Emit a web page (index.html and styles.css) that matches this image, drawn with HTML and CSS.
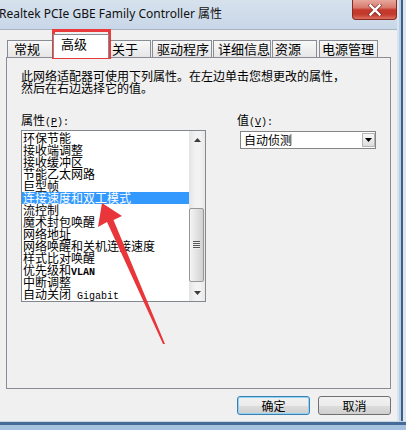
FILE: index.html
```html
<!DOCTYPE html>
<html>
<head>
<meta charset="utf-8">
<title>属性</title>
<link rel="stylesheet" href="styles.css">
</head>
<body>
<div class="screen">
  <div class="top">
    <div class="window">
      <div class="titlebar">
        <span class="title">Realtek PCIe GBE Family Controller 属性</span>
        <div class="close">
          <svg width="14" height="12" viewBox="0 0 14 12">
            <path d="M2.5 1.5 L11.5 10.5 M11.5 1.5 L2.5 10.5" stroke="#5a1a14" stroke-width="4" stroke-linecap="square" fill="none" opacity="0.55"/>
            <path d="M2.5 1.5 L11.5 10.5 M11.5 1.5 L2.5 10.5" stroke="#ffffff" stroke-width="2.4" stroke-linecap="square" fill="none"/>
          </svg>
        </div>
      </div>
      <div class="client">
        <div class="tabs">
          <div class="tab t1">常规</div>
          <div class="tab t2 active">高级</div>
          <div class="tab t3">关于</div>
          <div class="tab t4">驱动程序</div>
          <div class="tab t5">详细信息</div>
          <div class="tab t6">资源</div>
          <div class="tab t7">电源管理</div>
        </div>
        <div class="panel">
          <p class="desc">此网络适配器可使用下列属性。在左边单击您想更改的属性，<br>然后在右边选择它的值。</p>
          <div class="props">
            <div class="col-left">
              <div class="label">属性<span class="lat">(<u>P</u>):</span></div>
              <div class="listbox">
                <ul class="items">
                  <li>环保节能</li>
                  <li>接收端调整</li>
                  <li>接收缓冲区</li>
                  <li>节能乙太网路</li>
                  <li>巨型帧</li>
                  <li class="selected">连接速度和双工模式</li>
                  <li>流控制</li>
                  <li>魔术封包唤醒</li>
                  <li>网络地址</li>
                  <li>网络唤醒和关机连接速度</li>
                  <li>样式比对唤醒</li>
                  <li>优先级和<span class="lat bold">VLAN</span></li>
                  <li>中断调整</li>
                  <li>自动关闭<span class="lat"> Gigabit</span></li>
                </ul>
                <div class="scrollbar">
                  <div class="sb-btn">
                    <svg width="7" height="4" viewBox="0 0 7 4"><path d="M0 4 L3.5 0 L7 4 Z" fill="#3c3c3c"/></svg>
                  </div>
                  <div class="sb-track">
                    <div class="sb-thumb"><div class="grip"></div></div>
                  </div>
                  <div class="sb-btn">
                    <svg width="7" height="4" viewBox="0 0 7 4"><path d="M0 0 L7 0 L3.5 4 Z" fill="#3c3c3c"/></svg>
                  </div>
                </div>
              </div>
            </div>
            <div class="col-right">
              <div class="label">值<span class="lat">(<u>V</u>):</span></div>
              <div class="combo">
                <span class="combo-text">自动侦测</span>
                <span class="combo-btn">
                  <svg width="7" height="4" viewBox="0 0 7 4"><path d="M0 0 L7 0 L3.5 4 Z" fill="#000"/></svg>
                </span>
              </div>
            </div>
          </div>
        </div>
        <div class="buttons">
          <button class="btn default">确定</button>
          <button class="btn">取消</button>
        </div>
      </div>
    </div>
    <div class="frame-right"></div>
  </div>
  <div class="frame-bottom"></div>
  <div class="redbox"></div>
  <svg class="arrow" width="406" height="430" viewBox="0 0 406 430">
    <polygon points="102,203 122,216 113.5,220 165,344 163,344 107,222 98,227" fill="#e8363a"/>
  </svg>
</div>
</body>
</html>
```

FILE: styles.css
```css
* { box-sizing: border-box; }
html, body { margin: 0; padding: 0; }
body {
  width: 406px;
  height: 430px;
  overflow: hidden;
  background: #dde5ee;
  font-family: "Noto Sans CJK SC", sans-serif;
  font-size: 12px;
  color: #000;
}
.screen {
  position: relative;
  width: 406px;
  height: 430px;
  display: flex;
  flex-direction: column;
}
.top { display: flex; height: 421px; }
.window { width: 397px; display: flex; flex-direction: column; }

.titlebar {
  height: 30px;
  border-bottom: 1px solid #a7b4c4;
  background: linear-gradient(#d6e1ed, #c8d7e8);
  display: flex;
  justify-content: space-between;
  align-items: flex-start;
}
.title {
  font-family: "Noto Sans", "Noto Sans CJK SC", sans-serif;
  font-size: 12px;
  line-height: 16px;
  padding-top: 6px;
  margin-left: -1px;
  white-space: nowrap;
  color: #111;
}
.close {
  width: 45px;
  height: 20px;
  border: 1px solid #8a2b22;
  border-top: none;
  border-radius: 0 0 4px 4px;
  background: linear-gradient(#e8a89d 0%, #d87a6d 40%, #c4392c 52%, #c3392d 75%, #dc6f5f 100%);
  display: flex;
  align-items: center;
  justify-content: center;
}

.client {
  height: 391px;
  background: #f0f0f0;
  padding: 4px 6px 6px 6px;
  display: flex;
  flex-direction: column;
}
.tabs {
  height: 23px;
  display: flex;
  align-items: flex-end;
  margin-left: 1px;
  font-size: 13px;
  line-height: 13px;
}
.tab {
  height: 17px;
  border: 1px solid #898c95;
  border-bottom: none;
  padding-top: 1px;
  background: linear-gradient(#f8f8f8, #e6e6e6);
  white-space: nowrap;
}
.tab.active {
  height: 24px;
  margin-bottom: -1px;
  padding-top: 2px;
  background: #ffffff;
  position: relative;
  z-index: 1;
}
.t1 { width: 46px; padding-left: 6px; }
.t2 { width: 56px; padding-left: 7px; }
.t3 { width: 42px; padding-left: 2px; }
.t4 { width: 60px; padding-left: 4px; margin-left: 1px; }
.t5 { width: 58px; padding-left: 4px; margin-left: 1px; }
.t6 { width: 45px; padding-left: 2px; margin-left: 1px; }
.t7 { width: 59px; padding-left: 2px; margin-left: 2px; }

.panel {
  height: 332px;
  border: 1px solid #898c95;
  background: #f0f0f0;
  padding: 12px 14px 0;
}
.desc { margin: 0; line-height: 12px; white-space: nowrap; }
.props { display: flex; margin-top: 20px; }
.col-left { width: 185px; }
.col-right { margin-left: 31px; }
.label { line-height: 12px; height: 12px; white-space: nowrap; }
.lat { font-family: "Liberation Mono", monospace; font-size: 10px; }
.bold { font-weight: bold; }

.listbox {
  margin-top: 4px;
  width: 185px;
  height: 172px;
  border: 1px solid #828790;
  background: #fff;
  display: flex;
}
.items { list-style: none; margin: 0; padding: 1px 0; flex: 1; }
.items li { line-height: 12px; height: 12px; padding-left: 1px; white-space: nowrap; }
.items li.selected { background: #3399ff; color: #fff; }

.scrollbar {
  width: 16px;
  display: flex;
  flex-direction: column;
  background: linear-gradient(to right, #e4e4e4, #f2f2f2 40%, #f2f2f2 70%, #e8e8e8);
}
.sb-btn { height: 17px; display: flex; align-items: center; justify-content: center; }
.sb-track { flex: 1; padding-top: 60px; }
.sb-thumb {
  height: 74px;
  margin-right: 1px;
  border: 1px solid #979797;
  border-radius: 2px;
  background: linear-gradient(to right, #f4f4f4, #e3e3e3 50%, #d1d1d1);
  display: flex;
  align-items: center;
  justify-content: center;
}
.grip {
  width: 7px;
  height: 8px;
  background: repeating-linear-gradient(#555 0 1px, #eeeeee 1px 2px);
}

.combo {
  margin: 5px 0 0 3px;
  width: 136px;
  height: 18px;
  border: 1px solid #858585;
  background: #fff;
  display: flex;
  align-items: center;
  justify-content: space-between;
  padding-left: 3px;
}
.combo-text { line-height: 12px; }
.combo-btn {
  width: 13px;
  height: 14px;
  border: 1px solid #b5b5b5;
  background: linear-gradient(#f8f8f8, #dcdcdc);
  display: flex;
  align-items: center;
  justify-content: center;
}

.buttons { margin-top: 7px; display: flex; justify-content: flex-end; gap: 8px; }
.btn {
  width: 73px;
  height: 19px;
  border: 1px solid #707070;
  border-radius: 3px;
  background: linear-gradient(#f2f2f2, #ebebeb 50%, #dddddd 50%, #cfcfcf);
  font-family: "Noto Sans CJK SC", sans-serif;
  font-size: 12px;
  line-height: 12px;
  padding: 0;
  color: #000;
}
.btn.default {
  border-color: #3c7fb1;
  box-shadow: inset 0 0 0 1px #8fd3f5;
}

.frame-right {
  width: 9px;
  background: linear-gradient(to right, #d9e4f0 0 2px, #b9cde4 2px 4px, #3f5f88 4px 6px, #dde5ee 6px);
}
.frame-bottom {
  height: 9px;
  background: linear-gradient(#c9d6e4 0 1px, #466b96 1px 4px, #a6c2df 4px);
}

.redbox {
  position: absolute;
  left: 52px;
  top: 29px;
  width: 59px;
  height: 30px;
  border: 3px solid #e93b3b;
}
.arrow { position: absolute; left: 0; top: 0; pointer-events: none; }
```
